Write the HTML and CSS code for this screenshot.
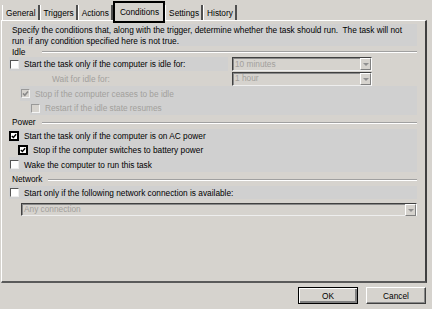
FILE: index.html
```html
<!DOCTYPE html>
<html>

<head>
	<meta charset="utf-8">
	<title>Conditions</title>
	<link rel="stylesheet" href="styles.css">
</head>

<body>

	<div class="dialog">
		<div class="tabs">
			<span class="tab">General</span>
			<span class="tab">Triggers</span>
			<span class="tab">Actions</span>
			<span class="tab current">Conditions</span>
			<span class="tab">Settings</span>
			<span class="tab">History</span>
		</div>

		<div class="panel">
			<p class="desc">Specify the conditions that, along with the trigger, determine whether the task should run.&nbsp; The task will not<br>run&nbsp; if any condition specified here is not true.</p>

			<!-- idle -->
			<div class="group g-idle"><span>Idle</span><i></i></div>
			<div class="row split h14">
				<label class="opt lv0"><span class="cb"></span>Start the task only if the computer is idle for:</label>
				<span class="combo off">10 minutes<b></b></span>
			</div>
			<div class="row split">
				<span class="lbl off">Wait for idle for:</span>
				<span class="combo off">1 hour<b></b></span>
			</div>
			<div class="row">
				<label class="opt lv2 off"><span class="cb dis"><svg viewBox="0 0 7 7"><path d="M1 3.4 L2.8 5.2 L6 1.4" /></svg></span>Stop if the computer ceases to be idle</label>
			</div>
			<div class="row h14">
				<label class="opt lv3 off"><span class="cb dis"></span>Restart if the idle state resumes</label>
			</div>

			<!-- power -->
			<div class="group h14"><span>Power</span><i></i></div>
			<div class="row h13">
				<label class="opt lv0"><span class="cb focus"><svg viewBox="0 0 7 7"><path d="M1 3.4 L2.8 5.2 L6 1.4" /></svg></span>Start the task only if the computer is on AC power</label>
			</div>
			<div class="row">
				<label class="opt lv1"><span class="cb focus"><svg viewBox="0 0 7 7"><path d="M1 3.4 L2.8 5.2 L6 1.4" /></svg></span>Stop if the computer switches to battery power</label>
			</div>
			<div class="row">
				<label class="opt lv0"><span class="cb"></span>Wake the computer to run this task</label>
			</div>

			<!-- network -->
			<div class="group h14"><span>Network</span><i></i></div>
			<div class="row h13">
				<label class="opt lv0"><span class="cb"></span>Start only if the following network connection is available:</label>
			</div>
			<span class="combo off wide">Any connection<b></b></span>
		</div>

		<div class="buttons">
			<button class="ok">OK</button>
			<button>Cancel</button>
		</div>
	</div>

</body>

</html>
```

FILE: styles.css
```css
* {
	padding: 0px;
	margin: 0px;
	box-sizing: border-box;
}

body {
	width: 432px;
	height: 309px;
	overflow: hidden;
	background-color: #d6d3ce;
	color: #000;
	font: 8.3px "Liberation Sans", Arial, sans-serif;
}

/* tab strip */
.tabs {
	display: flex;
	height: 20px;
	padding-left: 2px;
}

.tab {
	margin-top: 5px;
	height: 15px;
	line-height: 16px;
	padding: 0px 2px 0px 3px;
	border-left: 1px solid #fff;
	border-right: 2px solid #505050;
}

.tab.current {
	position: relative;
	z-index: 1;
	margin-top: 1px;
	height: 22px;
	line-height: 18px;
	padding: 0px 4px 0px 5px;
	border: 2px solid #000;
	background-color: #d6d3ce;
}

/* page */
.panel {
	margin-left: 1px;
	width: 426px;
	height: 263px;
	border-top: 1px solid #fff;
	border-left: 1px solid #fff;
	border-right: 2px solid #404040;
	border-bottom: 2px solid #5a5a5a;
	padding: 3px 8px 0px 6px;
	line-height: 1.25;
}

.desc {
	margin-left: 2px;
	padding: 1px 0px 0px 2px;
	height: 22px;
	line-height: 11px;
	background-color: #d0d0d0;
}

.group {
	display: flex;
	align-items: center;
	height: 15px;
	padding: 1px 0px 0px 4px;
}

.group.g-idle {
	height: 11px;
}

.group span {
	min-width: 24px;
}

.group i {
	flex: 1;
	margin-left: 6px;
	border-top: 1px solid #a0a0a0;
	border-bottom: 1px solid #fff;
}

.row {
	display: flex;
	align-items: center;
	height: 15px;
}

.row.h14 {
	height: 14px;
}

.row.h13 {
	height: 13px;
}

.group.h14 {
	height: 14px;
}

.row.split {
	display: grid;
	grid-template-columns: 224px 140px;
	align-items: center;
}

.opt {
	display: flex;
	align-items: center;
	flex: 1;
	height: 100%;
	padding-top: 1px;
	background-color: #d0d0d0;
}

.split .opt {
	margin-right: 4px;
}

.lv0 {
	margin-left: 1px;
}

.lv1 {
	margin-left: 10px;
}

.lv2 {
	margin-left: 12px;
}

.lv3 {
	margin-left: 22px;
}

.lbl {
	padding: 1px 0px 0px 44px;
}

.off {
	color: #a2a09c;
}

/* checkbox */
.cb {
	width: 9px;
	height: 9px;
	margin: -1px 5px 0px 1px;
	background-color: #fff;
	border: 1px solid;
	border-color: #555 #eee #eee #555;
}

.cb.dis {
	background-color: #d6d3ce;
	border-color: #999 #f4f4f4 #f4f4f4 #999;
}

.cb.focus {
	width: 10px;
	height: 10px;
	margin-left: 0px;
	border: 2px solid #000;
}

.cb svg {
	display: block;
	width: 100%;
	height: 100%;
}

.cb path {
	fill: none;
	stroke: #000;
	stroke-width: 1.6;
}

.cb.dis path {
	stroke: #8a8a8a;
}

/* drop down */
.combo {
	display: flex;
	align-items: center;
	height: 14px;
	padding-left: 2px;
	border: 1px solid;
	border-color: #404040 #fff #eee #404040;
	box-shadow: inset 1px 1px #888;
}

.combo b {
	position: relative;
	margin-left: auto;
	width: 11px;
	height: 12px;
	border: 1px solid;
	border-color: #fff #808080 #808080 #fff;
}

.combo b::after {
	content: "";
	position: absolute;
	left: 2px;
	top: 4px;
	border-left: 3px solid transparent;
	border-right: 3px solid transparent;
	border-top: 3px solid #909090;
}

.combo.wide {
	margin: 4px 0px 0px 13px;
	height: 13px;
}

/* buttons */
.buttons {
	display: flex;
	justify-content: flex-end;
	gap: 8px;
	padding: 4px 6px 0px 0px;
}

button {
	width: 60px;
	height: 17px;
	font: inherit;
	color: #000;
	background-color: #d6d3ce;
	border: 1px solid;
	border-color: #fff #404040 #404040 #fff;
	box-shadow: inset -1px -1px #888;
}

button.ok {
	border: 1px solid #000;
	box-shadow: inset 1px 1px #fff, inset -2px -2px #808080;
}
```
